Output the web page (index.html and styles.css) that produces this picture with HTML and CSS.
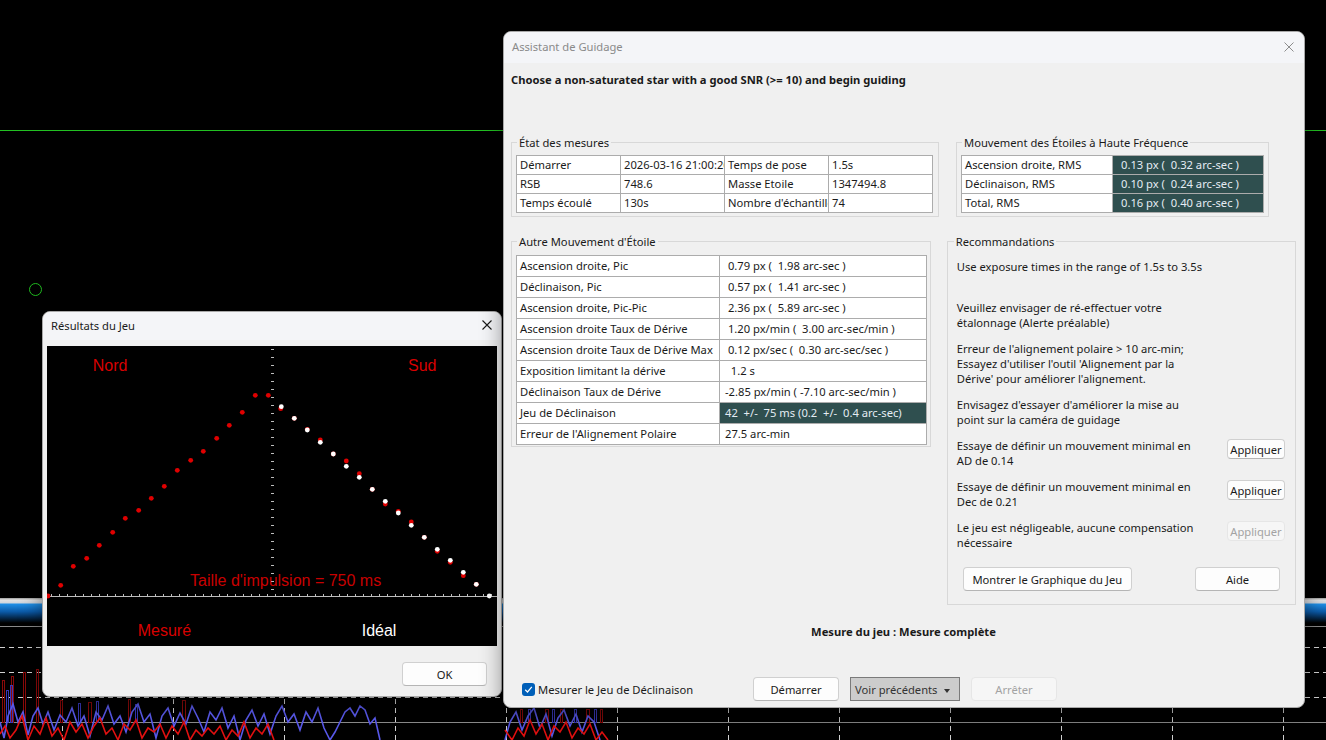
FILE: index.html
```html
<!DOCTYPE html>
<html lang="fr">
<head>
    <meta charset="UTF-8">
    <title>Assistant de Guidage</title>
    <link rel="stylesheet" href="styles.css">
</head>
<body>
    <!-- Fond : image de guidage et graphique d'historique -->
    <svg class="backdrop" width="1326" height="740" viewBox="0 0 1326 740">
        <defs>
            <linearGradient id="barGradient" x1="0" y1="0" x2="0" y2="1">
                <stop offset="0" stop-color="#9c9c9c"/>
                <stop offset="0.08" stop-color="#e2e2e2"/>
                <stop offset="0.2" stop-color="#cfd6de"/>
                <stop offset="0.24" stop-color="#1f8fe6"/>
                <stop offset="0.55" stop-color="#0b5aa8"/>
                <stop offset="1" stop-color="#000000"/>
            </linearGradient>
        </defs>
        <line x1="0" y1="130.5" x2="1326" y2="130.5" stroke="#22c022"/>
        <circle cx="35.5" cy="289.5" r="6" fill="none" stroke="#1fb81f"/>

        <rect x="0" y="598" width="1326" height="25" fill="url(#barGradient)"/>
        <g stroke="#8a8a8a">
            <line x1="0" y1="626.5" x2="1326" y2="626.5"/>
            <line x1="0" y1="722.5" x2="1326" y2="722.5"/>
        </g>
        <g stroke="#d0d0d0" stroke-dasharray="5 4">
            <line x1="0" y1="647.5" x2="1326" y2="647.5"/>
            <line x1="0" y1="672.5" x2="1326" y2="672.5"/>
            <line x1="0" y1="697.5" x2="1326" y2="697.5"/>
            <line x1="62.5" y1="627" x2="62.5" y2="740"/>
            <line x1="173.5" y1="627" x2="173.5" y2="740"/>
            <line x1="284.5" y1="627" x2="284.5" y2="740"/>
            <line x1="395.5" y1="627" x2="395.5" y2="740"/>
            <line x1="506.5" y1="627" x2="506.5" y2="740"/>
            <line x1="617.5" y1="627" x2="617.5" y2="740"/>
            <line x1="728.5" y1="627" x2="728.5" y2="740"/>
            <line x1="839.5" y1="627" x2="839.5" y2="740"/>
            <line x1="950.5" y1="627" x2="950.5" y2="740"/>
            <line x1="1061.5" y1="627" x2="1061.5" y2="740"/>
            <line x1="1172.5" y1="627" x2="1172.5" y2="740"/>
            <line x1="1283.5" y1="627" x2="1283.5" y2="740"/>
        </g>

        <!-- barres de corrections -->
        <g fill="none" stroke="#8b0a0a">
            <rect x="2.5" y="680.5" width="2" height="42"/>
            <rect x="11.5" y="676.5" width="2" height="46"/>
            <rect x="23.5" y="672.5" width="2" height="50"/>
            <rect x="36.5" y="669.5" width="2" height="53"/>
            <rect x="60.5" y="700.5" width="2" height="22"/>
            <rect x="88.5" y="702.5" width="3" height="20"/>
            <rect x="128.5" y="699.5" width="2" height="23"/>
            <rect x="182.5" y="700.5" width="3" height="22"/>
            <rect x="520.5" y="709.5" width="2" height="13"/>
            <rect x="545.5" y="709.5" width="3" height="13"/>
            <rect x="560.5" y="709.5" width="2" height="13"/>
            <rect x="586.5" y="709.5" width="3" height="13"/>
            <rect x="600.5" y="709.5" width="2" height="13"/>
        </g>
        <g fill="none" stroke="#3838b8">
            <rect x="6.5" y="690.5" width="2" height="32"/>
            <rect x="10.5" y="685.5" width="2" height="37"/>
            <rect x="78.5" y="703.5" width="2" height="19"/>
            <rect x="96.5" y="701.5" width="2" height="21"/>
            <rect x="135.5" y="704.5" width="2" height="18"/>
            <rect x="528.5" y="709.5" width="2" height="13"/>
            <rect x="552.5" y="709.5" width="2" height="13"/>
            <rect x="574.5" y="709.5" width="2" height="13"/>
            <rect x="594.5" y="709.5" width="2" height="13"/>
        </g>

        <!-- courbes AD / Dec -->
        <polyline class="trace-ra" points="0,722 4,738 8,716 13,704 18,722 23,712 28,735 33,716 38,708 43,724 48,712 54,730 60,715 66,722 72,708 78,726 84,716 90,736 96,712 102,720 108,706 114,724 120,716 126,732 132,712 138,704 144,722 150,714 156,738 162,716 168,708 174,726 180,713 186,724 192,706 198,718 204,732 210,712 216,720 222,708 228,728 234,716 240,740 246,720 252,710 258,726 264,714 270,734 276,716 282,706 288,722 294,714 300,730 306,712 312,722 318,708 324,728 330,740 335,732 340,722 345,712 350,708 355,716 360,706 365,710 370,724 375,718 380,740"/>
        <polyline class="trace-dec" points="0,734 5,726 10,738 16,730 22,716 28,740 34,726 40,734 46,718 52,736 58,728 64,740 70,722 76,732 82,724 88,738 94,726 100,718 106,734 112,728 118,740 124,724 130,730 136,720 142,738 148,728 154,732 160,724 166,738 172,726 178,734 184,722 190,740 196,730 202,736 208,728 214,734 220,726 226,740 232,730 238,736 244,722 250,738 256,728 262,734 268,724 274,740"/>
        <polyline class="trace-ra" points="505,740 510,722 516,712 522,730 528,716 534,708 540,728 546,714 552,736 558,718 564,710 570,726 576,714 582,732 588,716 594,722 600,740"/>
        <polyline class="trace-dec" points="505,730 512,740 518,728 524,736 530,720 536,734 542,724 548,740 554,726 560,732 566,722 572,738 578,728 584,734 590,724 596,740 602,732 608,740"/>
    </svg>

    <!-- Fenêtre : Résultats du Jeu -->
    <div class="window results">
        <div class="titlebar">
            <span class="title">Résultats du Jeu</span>
            <svg class="close-icon" width="10" height="10" viewBox="0 0 10 10">
                <path d="M0.5 0.5 L9.5 9.5 M9.5 0.5 L0.5 9.5" stroke="#1a1a1a" stroke-width="1.1"/>
            </svg>
        </div>
        <div class="results-body">
            <svg class="backlash-graph" width="450" height="300" viewBox="0 0 450 300">
                <rect width="450" height="300" fill="#000"/>
                <g stroke="#bdbdbd">
                    <path d="M224 3.5h3M224 11.5h3M224 19.5h3M224 27.5h3M224 35.5h3M224 43.5h3M224 51.5h3M224 59.5h3M224 67.5h3M224 75.5h3M224 83.5h3M224 91.5h3M224 99.5h3M224 107.5h3M224 115.5h3M224 123.5h3M224 131.5h3M224 139.5h3M224 147.5h3M224 155.5h3M224 163.5h3M224 171.5h3M224 179.5h3M224 187.5h3M224 195.5h3M224 203.5h3M224 211.5h3M224 219.5h3M224 227.5h3M224 235.5h3M224 243.5h3"/>
                    <line x1="0" y1="250.5" x2="450" y2="250.5"/>
                    <path d="M4.5 248v2M12.5 248v2M20.5 248v2M28.5 248v2M36.5 248v2M44.5 248v2M52.5 248v2M60.5 248v2M68.5 248v2M76.5 248v2M84.5 248v2M92.5 248v2M100.5 248v2M108.5 248v2M116.5 248v2M124.5 248v2M132.5 248v2M140.5 248v2M148.5 248v2M156.5 248v2M164.5 248v2M172.5 248v2M180.5 248v2M188.5 248v2M196.5 248v2M204.5 248v2M212.5 248v2M220.5 248v2M228.5 248v2M236.5 248v2M244.5 248v2M252.5 248v2M260.5 248v2M268.5 248v2M276.5 248v2M284.5 248v2M292.5 248v2M300.5 248v2M308.5 248v2M316.5 248v2M324.5 248v2M332.5 248v2M340.5 248v2M348.5 248v2M356.5 248v2M364.5 248v2M372.5 248v2M380.5 248v2M388.5 248v2M396.5 248v2M404.5 248v2M412.5 248v2M420.5 248v2M428.5 248v2M436.5 248v2M444.5 248v2"/>
                </g>

                <text class="graph-label" x="45.7" y="25">Nord</text>
                <text class="graph-label" x="361" y="25">Sud</text>
                <text class="graph-label pulse" x="143" y="240">Taille d'impulsion = 750 ms</text>
                <text class="graph-label" x="90.7" y="290">Mesuré</text>
                <text class="graph-label ideal" x="314.7" y="290">Idéal</text>

                <g fill="#e00000">
                    <circle cx="1" cy="250" r="2.4"/>
                    <circle cx="13.7" cy="239.3" r="2.4"/>
                    <circle cx="26.3" cy="220.3" r="2.4"/>
                    <circle cx="39.7" cy="212.3" r="2.4"/>
                    <circle cx="52.3" cy="199.3" r="2.4"/>
                    <circle cx="65.7" cy="186.3" r="2.4"/>
                    <circle cx="78.3" cy="172.3" r="2.4"/>
                    <circle cx="91.7" cy="164.3" r="2.4"/>
                    <circle cx="104.3" cy="152.3" r="2.4"/>
                    <circle cx="117.3" cy="140.3" r="2.4"/>
                    <circle cx="130.3" cy="124.3" r="2.4"/>
                    <circle cx="143.7" cy="114.3" r="2.4"/>
                    <circle cx="156.3" cy="105.3" r="2.4"/>
                    <circle cx="169.7" cy="92.3" r="2.4"/>
                    <circle cx="182.3" cy="79.3" r="2.4"/>
                    <circle cx="195.3" cy="66.3" r="2.4"/>
                    <circle cx="208.3" cy="49.3" r="2.4"/>
                    <circle cx="221.3" cy="49.3" r="2.4"/>
                    <circle cx="233.7" cy="62.7" r="2.4"/>
                    <circle cx="247.3" cy="72.3" r="2.4"/>
                    <circle cx="260.3" cy="83.3" r="2.4"/>
                    <circle cx="273.3" cy="94" r="2.4"/>
                    <circle cx="286.3" cy="108" r="2.4"/>
                    <circle cx="299.3" cy="115" r="2.4"/>
                    <circle cx="312.3" cy="127.7" r="2.4"/>
                    <circle cx="325.3" cy="143.3" r="2.4"/>
                    <circle cx="338.3" cy="158" r="2.4"/>
                    <circle cx="351.3" cy="165.3" r="2.4"/>
                    <circle cx="364.3" cy="176" r="2.4"/>
                    <circle cx="377.3" cy="191.3" r="2.4"/>
                    <circle cx="390.3" cy="205.3" r="2.4"/>
                    <circle cx="403.3" cy="216.3" r="2.4"/>
                    <circle cx="416.3" cy="229.7" r="2.4"/>
                    <circle cx="429.3" cy="238.3" r="2.4"/>
                </g>
                <g fill="#ffffff">
                    <circle cx="234.3" cy="60.7" r="2.4"/>
                    <circle cx="247.3" cy="72.3" r="2.4"/>
                    <circle cx="260.3" cy="84" r="2.4"/>
                    <circle cx="273.3" cy="96.3" r="2.4"/>
                    <circle cx="286.3" cy="108" r="2.4"/>
                    <circle cx="299.3" cy="120.3" r="2.4"/>
                    <circle cx="312.3" cy="131.3" r="2.4"/>
                    <circle cx="325.3" cy="143.3" r="2.4"/>
                    <circle cx="338.3" cy="155.3" r="2.4"/>
                    <circle cx="351.3" cy="167" r="2.4"/>
                    <circle cx="364.3" cy="179.3" r="2.4"/>
                    <circle cx="377.3" cy="191.3" r="2.4"/>
                    <circle cx="390.3" cy="203.3" r="2.4"/>
                    <circle cx="403.3" cy="214.3" r="2.4"/>
                    <circle cx="416.3" cy="226.3" r="2.4"/>
                    <circle cx="429.3" cy="238.3" r="2.4"/>
                    <circle cx="442.3" cy="250" r="2.4"/>
                </g>
            </svg>
            <div class="results-actions">
                <button class="btn btn-ok">OK</button>
            </div>
        </div>
    </div>

    <!-- Fenêtre : Assistant de Guidage -->
    <div class="window assistant">
        <div class="titlebar inactive">
            <span class="title">Assistant de Guidage</span>
            <svg class="close-icon" width="10" height="10" viewBox="0 0 10 10">
                <path d="M0.5 0.5 L9.5 9.5 M9.5 0.5 L0.5 9.5" stroke="#8c8c8c" stroke-width="1"/>
            </svg>
        </div>
        <div class="assistant-body">
            <p class="instructions">Choose a non-saturated star with a good SNR (&gt;= 10) and begin guiding</p>

            <div class="group-row">
                <fieldset class="group group-status">
                    <legend>État des mesures</legend>
                    <table class="data-table status-table">
                        <colgroup><col style="width:104px"><col style="width:104px"><col style="width:104px"><col style="width:104px"></colgroup>
                        <tr><td>Démarrer</td><td>2026-03-16 21:00:26</td><td>Temps de pose</td><td>1.5s</td></tr>
                        <tr><td>RSB</td><td>748.6</td><td>Masse Etoile</td><td>1347494.8</td></tr>
                        <tr><td>Temps écoulé</td><td>130s</td><td>Nombre d'échantillons</td><td>74</td></tr>
                    </table>
                </fieldset>
                <fieldset class="group group-hf">
                    <legend>Mouvement des Étoiles à Haute Fréquence</legend>
                    <table class="data-table hf-table">
                        <colgroup><col style="width:151px"><col style="width:151px"></colgroup>
                        <tr><td>Ascension droite, RMS</td><td class="value highlight">0.13 px (  0.32 arc-sec )</td></tr>
                        <tr><td>Déclinaison, RMS</td><td class="value highlight">0.10 px (  0.24 arc-sec )</td></tr>
                        <tr><td>Total, RMS</td><td class="value highlight">0.16 px (  0.40 arc-sec )</td></tr>
                    </table>
                </fieldset>
            </div>

            <div class="group-row second">
                <fieldset class="group group-other">
                    <legend>Autre Mouvement d'Étoile</legend>
                    <table class="data-table tall">
                        <colgroup><col style="width:203px"><col style="width:207px"></colgroup>
                        <tr><td>Ascension droite, Pic</td><td class="value"> 0.79 px (  1.98 arc-sec )</td></tr>
                        <tr><td>Déclinaison, Pic</td><td class="value"> 0.57 px (  1.41 arc-sec )</td></tr>
                        <tr><td>Ascension droite, Pic-Pic</td><td class="value"> 2.36 px (  5.89 arc-sec )</td></tr>
                        <tr><td>Ascension droite Taux de Dérive</td><td class="value"> 1.20 px/min (  3.00 arc-sec/min )</td></tr>
                        <tr><td>Ascension droite Taux de Dérive Max</td><td class="value"> 0.12 px/sec (  0.30 arc-sec/sec )</td></tr>
                        <tr><td>Exposition limitant la dérive</td><td class="value">  1.2 s</td></tr>
                        <tr><td>Déclinaison Taux de Dérive</td><td class="value">-2.85 px/min ( -7.10 arc-sec/min )</td></tr>
                        <tr><td>Jeu de Déclinaison</td><td class="value highlight">42  +/-  75 ms (0.2  +/-  0.4 arc-sec)</td></tr>
                        <tr><td>Erreur de l'Alignement Polaire</td><td class="value">27.5 arc-min</td></tr>
                    </table>
                </fieldset>

                <fieldset class="group group-reco">
                    <legend>Recommandations</legend>
                    <div class="reco first">Use exposure times in the range of 1.5s to 3.5s</div>
                    <div class="reco">Veuillez envisager de ré-effectuer votre<br>étalonnage (Alerte préalable)</div>
                    <div class="reco">Erreur de l'alignement polaire &gt; 10 arc-min;<br>Essayez d'utiliser l'outil 'Alignement par la<br>Dérive' pour améliorer l'alignement.</div>
                    <div class="reco">Envisagez d'essayer d'améliorer la mise au<br>point sur la caméra de guidage</div>
                    <div class="reco with-action">
                        <span>Essaye de définir un mouvement minimal en<br>AD de 0.14</span>
                        <button class="btn btn-apply">Appliquer</button>
                    </div>
                    <div class="reco with-action">
                        <span>Essaye de définir un mouvement minimal en<br>Dec de 0.21</span>
                        <button class="btn btn-apply">Appliquer</button>
                    </div>
                    <div class="reco with-action">
                        <span>Le jeu est négligeable, aucune compensation<br>nécessaire</span>
                        <button class="btn btn-apply" disabled>Appliquer</button>
                    </div>
                    <div class="reco-buttons">
                        <button class="btn btn-graph">Montrer le Graphique du Jeu</button>
                        <button class="btn btn-help">Aide</button>
                    </div>
                </fieldset>
            </div>

            <p class="status">Mesure du jeu : Mesure complète</p>

            <div class="footer-bar">
                <label class="check">
                    <span class="checkbox">
                        <svg width="9" height="9" viewBox="0 0 9 9"><path d="M1.2 4.8 L3.5 7 L7.8 1.8" fill="none" stroke="#fff" stroke-width="1.2"/></svg>
                    </span>
                    Mesurer le Jeu de Déclinaison
                </label>
                <button class="btn btn-action">Démarrer</button>
                <button class="btn btn-history">Voir précédents <span class="caret"></span></button>
                <button class="btn btn-action" disabled>Arrêter</button>
            </div>
        </div>
    </div>
</body>
</html>
```

FILE: styles.css
```css
/* Couleurs */
:root {
    --window-bg: #f0f0f0;
    --title-bg: #f4f5f8;
    --text: #1a1a1a;
    --text-muted: #8a8a8a;
    --grid-line: #acacac;
    --group-line: #d8d8d8;
    --teal: #2f4f4f;
    --teal-text: #e4ecf3;
}

body {
    margin: 0;
    width: 1326px;
    height: 740px;
    overflow: hidden;
    position: relative;
    background-color: #000;
    font-family: "Noto Sans", sans-serif;
    font-size: 11.2px;
    color: var(--text);
}

.backdrop {
    position: absolute;
    top: 0;
    left: 0;
}

.trace-ra {
    fill: none;
    stroke: #5858e8;
    stroke-width: 1.6;
}

.trace-dec {
    fill: none;
    stroke: #e01010;
    stroke-width: 1.6;
}

/* Fenêtres */
.window {
    position: absolute;
    box-sizing: border-box;
    background-color: var(--window-bg);
    border: 1px solid #a8a8a8;
    border-radius: 8px;
    box-shadow: 0 6px 22px rgba(0, 0, 0, 0.45);
    overflow: hidden;
}

.titlebar {
    box-sizing: border-box;
    display: flex;
    align-items: center;
    justify-content: space-between;
    height: 28px;
    padding: 0 9px 2px 8px;
    background-color: var(--title-bg);
}

.titlebar .title {
    line-height: 15px;
}

.titlebar.inactive .title {
    color: var(--text-muted);
}

/* Résultats du Jeu */
.results {
    left: 42px;
    top: 311px;
    width: 460px;
    height: 386px;
}

.results-body {
    padding: 6px 4px 0 4px;
}

.backlash-graph {
    display: block;
}

.graph-label {
    font-family: "Liberation Sans", Arial, sans-serif;
    font-size: 16px;
    fill: #d80000;
}

.graph-label.pulse {
    fill: #c80000;
}

.graph-label.ideal {
    fill: #ffffff;
}

.results-actions {
    display: flex;
    justify-content: flex-end;
    padding: 16px 10px 0 0;
}

/* Boutons */
.btn {
    font: inherit;
    color: var(--text);
    background-color: #fdfdfd;
    border: 1px solid #d0d0d0;
    border-bottom-color: #b5b5b5;
    border-radius: 4px;
    padding: 0;
    height: 24px;
}

.btn:disabled {
    color: #a3a3a3;
    background-color: #f6f6f6;
    border-color: #e6e6e6;
}

.btn-ok {
    width: 85px;
}

/* Assistant de Guidage */
.assistant {
    left: 503px;
    top: 31px;
    width: 802px;
    height: 677px;
}

.assistant .titlebar {
    height: 31px;
    padding-right: 10px;
}

.assistant-body {
    padding: 9px 8px 0 7px;
}

.instructions {
    margin: 0;
    font-weight: bold;
    line-height: 15px;
}

.group-row {
    display: flex;
    align-items: flex-start;
    margin-top: 48px;
}

.group-row.second {
    margin-top: 17px;
}

.group {
    margin: 0;
    padding: 5px 4px 3px 4px;
    border: 1px solid var(--group-line);
    min-width: 0;
}

.group legend {
    padding: 0 2px;
    margin-left: 1px;
    line-height: 15px;
}

.group-status {
    width: 418px;
}

.group-hf {
    width: 303px;
    margin-left: 17px;
}

.group-other {
    width: 412px;
    padding-top: 6px;
    padding-bottom: 1px;
}

.group-reco {
    width: 330px;
    margin-left: 16px;
    padding: 10px 10px 13px 9px;
}

.group-reco legend {
    margin-left: -3px;
}

/* Tableaux */
.data-table {
    border-collapse: collapse;
    table-layout: fixed;
    width: 410px;
    background-color: #fff;
    border: 1px solid var(--grid-line);
}

.status-table {
    width: 416px;
}

.hf-table {
    width: 302px;
}

.data-table td {
    border: 1px solid var(--grid-line);
    padding: 1px 3px;
    line-height: 16px;
    white-space: pre;
    overflow: hidden;
    text-overflow: clip;
}

.data-table.tall td {
    padding-top: 2px;
    padding-bottom: 2px;
}

.data-table.tall td.value {
    padding-left: 5px;
}

.hf-table td.value {
    padding-left: 8px;
}

.data-table td.highlight {
    background-color: var(--teal);
    color: var(--teal-text);
}

/* Recommandations */
.reco {
    line-height: 15px;
    margin-bottom: 11px;
}

.reco.first {
    min-height: 30px;
}

.reco.with-action {
    display: flex;
    align-items: flex-start;
    justify-content: space-between;
}

.btn-apply {
    width: 58px;
    height: 20px;
    margin-top: 1px;
}

.reco-buttons {
    display: flex;
    justify-content: space-between;
    padding: 6px 5px 0 6px;
}

.btn-graph {
    width: 169px;
}

.btn-help {
    width: 85px;
}

/* Bas de fenêtre */
.status {
    margin: 19px 0 0;
    text-align: center;
    font-weight: bold;
    line-height: 15px;
}

.footer-bar {
    display: flex;
    align-items: center;
    margin-top: 38px;
}

.check {
    display: flex;
    align-items: center;
    gap: 3px;
    width: 231px;
    margin-left: 11px;
}

.checkbox {
    display: flex;
    align-items: center;
    justify-content: center;
    width: 13px;
    height: 13px;
    border-radius: 3px;
    background-color: #005fb8;
}

.btn-action {
    width: 86px;
}

.btn-history {
    width: 110px;
    margin: 0 11px;
    padding: 0 4px;
    text-align: left;
    background-color: #cccccc;
    border: 1px solid #7a7a7a;
    border-radius: 0;
    color: #333;
}

.caret {
    display: inline-block;
    margin-left: 4px;
    border-left: 3.5px solid transparent;
    border-right: 3.5px solid transparent;
    border-top: 4px solid #333;
    vertical-align: middle;
}
```
